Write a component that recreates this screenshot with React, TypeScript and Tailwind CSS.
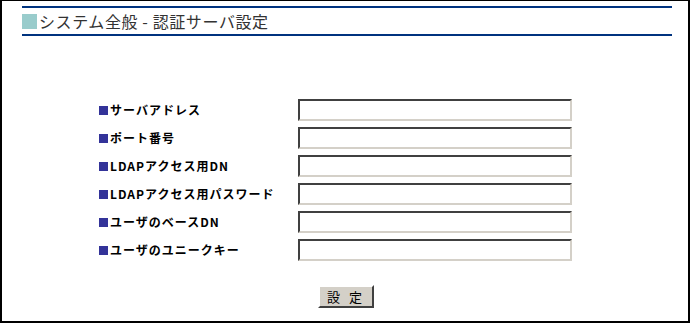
import React from "react";

const fields: string[] = [
   "サーバアドレス",
   "ポート番号",
   "LDAPアクセス用DN",
   "LDAPアクセス用パスワード",
   "ユーザのベースDN",
   "ユーザのユニークキー",
];

const App: React.FC = () => {
   return (
      <div
         className="w-[690px] h-[323px] bg-white border-black border-t border-l-2 border-r-2 border-b-2 box-border"
         style={{ fontFamily: '"Noto Sans CJK JP", "Noto Sans", sans-serif' }}
      >
         {/* header */}
         <div className="ml-[20px] mt-[5px] w-[650px]">
            <div className="h-[2px] bg-[#00337f]" />
            <div className="h-[26px] flex items-center">
               <span className="w-[15px] h-[15px] bg-[#99cccc] mr-[2px]" />
               <span className="text-[16px] leading-none text-[#333333] tracking-[0.6px]">システム全般 - 認証サーバ設定</span>
            </div>
            <div className="h-[2px] bg-[#00337f]" />
         </div>

         {/* form */}
         <div className="mt-[63px] pl-[97px] flex flex-col gap-[6px]">
            {fields.map((label) => (
               <div key={label} className="flex items-center h-[22px]">
                  <div className="w-[199px] flex items-center">
                     <span className="w-[9px] h-[9px] bg-[#333399] mr-[2px]" />
                     <span className="text-[12px] font-bold text-black leading-none tracking-[1px]">{label}</span>
                  </div>
                  <input
                     type="text"
                     className="w-[274px] h-[22px] bg-white border-2 border-t-[#404040] border-l-[#404040] border-b-[#d4d0c8] border-r-[#d4d0c8] outline-none"
                  />
               </div>
            ))}
         </div>

         <div className="mt-[22px] pl-[316px]">
            <button className="w-[56px] h-[23px] bg-[#d4d0c8] text-[13px] text-black border-2 border-t-white border-l-white border-b-[#404040] border-r-[#404040] leading-none tracking-[3px]">
               設 定
            </button>
         </div>
      </div>
   );
};

export default App;
